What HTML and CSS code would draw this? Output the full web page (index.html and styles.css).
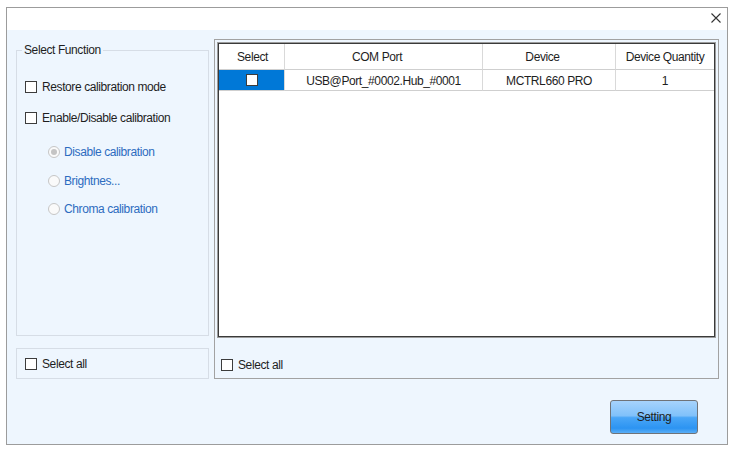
FILE: index.html
```html
<!DOCTYPE html>
<html>
<head>
<meta charset="UTF-8">
<title>Calibration Setting</title>
<link rel="stylesheet" href="styles.css">
</head>
<body>
<div class="window">
	<div class="titlebar">
		<button class="close" type="button">
			<svg width="10" height="10" viewBox="0 0 10 10"><path d="M0.5 0.5L9.5 9.5M9.5 0.5L0.5 9.5" stroke="#333" stroke-width="1.1" fill="none"/></svg>
		</button>
	</div>
	<div class="content">
		<div class="main">
			<div class="left">
				<fieldset class="func">
					<legend>Select Function</legend>
					<div class="opt row1"><span class="chk"></span>Restore calibration mode</div>
					<div class="opt row2"><span class="chk"></span>Enable/Disable calibration</div>
					<div class="opt sub row3"><span class="radio on"></span>Disable calibration</div>
					<div class="opt sub row4"><span class="radio"></span>Brightnes...</div>
					<div class="opt sub row5"><span class="radio"></span>Chroma calibration</div>
				</fieldset>
				<div class="allbox">
					<div class="opt"><span class="chk"></span>Select all</div>
				</div>
			</div>
			<div class="panel">
				<div class="grid">
					<table class="dev_tbl">
						<colgroup>
							<col class="c_sel">
							<col class="c_com">
							<col class="c_dev">
							<col>
						</colgroup>
						<tr>
							<th class="first">Select</th>
							<th class="shift">COM Port</th>
							<th class="shift">Device</th>
							<th class="last">Device Quantity</th>
						</tr>
						<tr>
							<td class="sel"><span class="chk"></span></td>
							<td>USB@Port_#0002.Hub_#0001</td>
							<td>MCTRL660 PRO</td>
							<td class="last">1</td>
						</tr>
					</table>
				</div>
				<div class="panel_foot">
					<div class="opt"><span class="chk"></span>Select all</div>
				</div>
			</div>
		</div>
		<div class="actions">
			<button class="setting" type="button">Setting</button>
		</div>
	</div>
</div>
</body>
</html>
```

FILE: styles.css
```css
body {
	margin: 0;
	background-color: #ffffff;
	font-family: "Liberation Sans", Arial, sans-serif;
	font-size: 12px;
	letter-spacing: -0.4px;
	color: #1e1e1e;
}
.window {
	margin: 7px 0 0 6px;
	width: 722px;
	height: 438px;
	box-sizing: border-box;
	border: 1px solid #9c9c9c;
	display: flex;
	flex-direction: column;
}
.titlebar {
	height: 22px;
	background-color: #ffffff;
	display: flex;
	justify-content: flex-end;
	align-items: flex-start;
	padding: 5px 6px 0 0;
	box-sizing: border-box;
}
.close {
	border: 0;
	background: none;
	padding: 0;
	width: 10px;
	height: 10px;
	display: block;
}
.close svg {
	display: block;
}
.content {
	flex: 1;
	background-color: #eef6fe;
	padding: 9px 8px 10px 9px;
	display: flex;
	flex-direction: column;
}
.main {
	display: flex;
	gap: 5px;
	height: 340px;
}
.left {
	width: 193px;
	display: flex;
	flex-direction: column;
}
.func {
	flex: 1;
	margin: 4px 0 0 0;
	min-width: 0;
	border: 1px solid #d6dde6;
	padding: 23px 0 0 5px;
}
.func legend {
	padding: 0 2px;
	line-height: 14px;
}
.opt {
	display: flex;
	align-items: center;
	height: 14px;
	line-height: 14px;
	white-space: nowrap;
}
.chk {
	width: 12px;
	height: 12px;
	box-sizing: border-box;
	border: 1px solid #3c3c3c;
	background-color: #ffffff;
	margin-right: 5px;
	flex: none;
}
.radio {
	width: 12px;
	height: 12px;
	box-sizing: border-box;
	border: 1px solid #c6c6c6;
	border-radius: 50%;
	background-color: #fafafa;
	margin-right: 4px;
	flex: none;
	display: flex;
	align-items: center;
	justify-content: center;
}
.radio.on::after {
	content: "";
	width: 6px;
	height: 6px;
	border-radius: 50%;
	background-color: #c4c4c4;
}
.func .opt {
	margin-left: 3px;
}
.func .sub {
	margin-left: 26px;
	color: #2d6cc0;
}
.row2 { margin-top: 17px; }
.row3 { margin-top: 20px; }
.row4 { margin-top: 15px; }
.row5 { margin-top: 14px; }
.allbox {
	margin-top: 12px;
	height: 31px;
	box-sizing: border-box;
	border: 1px solid #d6dde6;
	padding: 1px 0 0 8px;
	display: flex;
	align-items: center;
}
.panel {
	width: 505px;
	box-sizing: border-box;
	border: 1px solid #a2a2a2;
	padding: 2px;
	display: flex;
	flex-direction: column;
}
.grid {
	height: 296px;
	box-sizing: border-box;
	border: 1px solid #9c9c9c;
	box-shadow: inset 0 0 0 1px #3a3a3a;
	padding: 1px;
	background-color: #ffffff;
}
.dev_tbl {
	width: 100%;
	table-layout: fixed;
	border-collapse: separate;
	border-spacing: 0;
}
.c_sel { width: 66px; }
.c_com { width: 198px; }
.c_dev { width: 133px; }
.dev_tbl th, .dev_tbl td {
	padding: 1px 0 0 0;
	text-align: center;
	font-weight: normal;
	border-right: 1px solid #d9d9d9;
	border-bottom: 1px solid #cfcfcf;
	white-space: nowrap;
	overflow: hidden;
}
.dev_tbl th {
	height: 24px;
}
.dev_tbl td {
	height: 18px;
	padding-top: 2px;
}
.dev_tbl th.first {
	padding-left: 2px;
}
.dev_tbl th.shift {
	padding-right: 13px;
}
.dev_tbl .last {
	border-right: 0;
}
.dev_tbl td.sel {
	background-color: #0078d7;
}
.dev_tbl td.sel .chk {
	display: inline-block;
	vertical-align: middle;
	margin: 0 0 3px 0;
}
.panel_foot {
	padding: 20px 0 0 4px;
}
.actions {
	margin-top: 21px;
	display: flex;
	justify-content: flex-end;
	padding-right: 21px;
}
.setting {
	width: 88px;
	height: 34px;
	border: 1px solid #6f7378;
	border-radius: 3px;
	font-family: "Liberation Sans", Arial, sans-serif;
	font-size: 12px;
	letter-spacing: -0.4px;
	color: #1e1e1e;
	background: linear-gradient(#a6d3fc 0%, #80c1fa 46%, #4aa6f7 52%, #2c94f2 85%, #5aaef6 100%);
	padding: 0;
}
```
